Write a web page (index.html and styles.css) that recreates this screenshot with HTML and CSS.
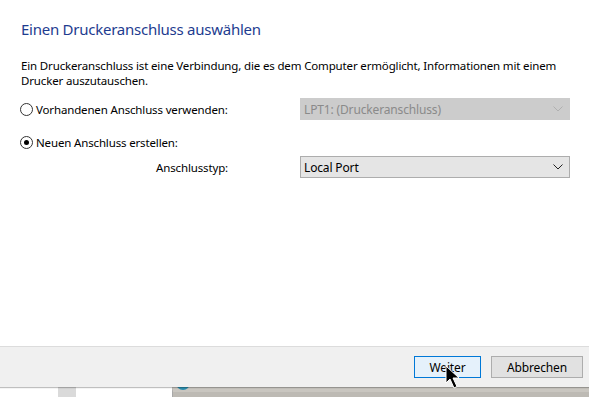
FILE: index.html
```html
<!DOCTYPE html>
<html lang="de">
<head>
<meta charset="UTF-8">
<title>Druckeranschluss</title>
<link rel="stylesheet" href="styles.css">
</head>
<body>
<div class="wizard">
    <div class="content">
        <h1 class="title">Einen Druckeranschluss auswählen</h1>
        <p class="desc">Ein Druckeranschluss ist eine Verbindung, die es dem Computer ermöglicht, Informationen mit einem Drucker auszutauschen.</p>

        <div class="row row-first">
            <label class="radio"><span class="dot"></span>Vorhandenen Anschluss verwenden:</label>
            <div class="combo disabled">
                <span>LPT1: (Druckeranschluss)</span>
                <svg class="chev" width="10" height="6" viewBox="0 0 10 6"><path d="M0.5 0.5 L5 5 L9.5 0.5" fill="none" stroke="currentColor" stroke-width="1"/></svg>
            </div>
        </div>

        <div class="row row-second">
            <label class="radio checked"><span class="dot"></span>Neuen Anschluss erstellen:</label>
        </div>

        <div class="row row-type">
            <span class="type-label">Anschlusstyp:</span>
            <div class="combo">
                <span>Local Port</span>
                <svg class="chev" width="10" height="6" viewBox="0 0 10 6"><path d="M0.5 0.5 L5 5 L9.5 0.5" fill="none" stroke="currentColor" stroke-width="1"/></svg>
            </div>
        </div>
    </div>

    <div class="footer">
        <button class="btn primary">Weiter</button>
        <button class="btn">Abbrechen</button>
    </div>
</div>

<div class="behind">
    <div class="b-white1"></div>
    <div class="b-scroll"></div>
    <div class="b-white2"></div>
    <div class="b-gray"><span class="b-icon"></span></div>
</div>

<svg class="cursor" width="16" height="26" viewBox="0 0 16 26">
    <path d="M1 1 L1 18 L5 14 L9 23 L12 21.5 L8 13 L14 13 Z" fill="#000" stroke="#fff" stroke-width="1"/>
</svg>
</body>
</html>
```

FILE: styles.css
```css
body {
    margin: 0;
    width: 589px;
    height: 397px;
    overflow: hidden;
    font-family: "Noto Sans", "Open Sans", sans-serif;
    font-size: 11.5px;
    letter-spacing: -0.15px;
    color: #000;
    background: #fff;
    position: relative;
}
.wizard {
    display: flex;
    flex-direction: column;
}
.content {
    height: 346px;
    padding: 0 19px 0 21px;
    box-sizing: border-box;
}
.title {
    margin: 0;
    padding-top: 18px;
    font-size: 15px;
    letter-spacing: -0.25px;
    font-weight: normal;
    color: #1e3c8f;
    line-height: 22px;
}
.desc {
    margin: 18px 0 0;
    line-height: 15px;
    width: 548px;
}
.row {
    display: flex;
    align-items: center;
    justify-content: space-between;
}
.row-first {
    margin-top: 10px;
}
.row-second {
    margin-top: 15px;
}
.row-type {
    margin-top: 6px;
}
.radio {
    display: flex;
    align-items: center;
    gap: 3px;
    margin-left: -1px;
}
.dot {
    width: 11px;
    height: 11px;
    border: 1px solid #333;
    border-radius: 50%;
    position: relative;
}
.checked .dot::after {
    content: "";
    position: absolute;
    left: 3px;
    top: 3px;
    width: 5px;
    height: 5px;
    border-radius: 50%;
    background: #000;
}
.type-label {
    width: 207px;
    text-align: right;
}
.combo {
    width: 270px;
    height: 22px;
    box-sizing: border-box;
    border: 1px solid #adadad;
    background: #e5e5e5;
    display: flex;
    align-items: center;
    justify-content: space-between;
    padding: 0 6px 0 3px;
    font-size: 12px;
    color: #000;
}
.combo.disabled {
    background: #cccccc;
    border-color: #cccccc;
    color: #8a8a8a;
}
.chev {
    color: #222;
}
.disabled .chev {
    color: #b0b0b0;
}
.footer {
    height: 40px;
    background: #f0f0f0;
    border-top: 1px solid #dcdcdc;
    display: flex;
    align-items: center;
    justify-content: flex-end;
    gap: 10px;
    padding-right: 6px;
    box-shadow: 0 1px 1px rgba(0,0,0,0.25);
    position: relative;
    z-index: 1;
}
.btn {
    height: 22px;
    font-family: inherit;
    font-size: 12px;
    letter-spacing: -0.15px;
    border: 1px solid #adadad;
    background: #e1e1e1;
    padding: 0;
    width: 92px;
    color: #000;
}
.btn.primary {
    width: 67px;
    border-color: #0078d7;
    background: #e5f1fb;
}
.behind {
    display: flex;
    height: 11px;
}
.b-white1 {
    width: 58px;
    background: #fff;
}
.b-scroll {
    width: 18px;
    background: #dadada;
}
.b-white2 {
    width: 96px;
    background: #fff;
}
.b-gray {
    flex: 1;
    background: #bdbab4;
    border-left: 1px solid #a9a9a9;
    border-top: 5px solid #c9c6c0;
    position: relative;
}
.b-icon {
    position: absolute;
    left: 3px;
    top: -11px;
    width: 14px;
    height: 9px;
    border-radius: 0 0 7px 7px;
    background: #2b8fb0;
}
.cursor {
    position: absolute;
    left: 445px;
    top: 365px;
    z-index: 2;
}
```
